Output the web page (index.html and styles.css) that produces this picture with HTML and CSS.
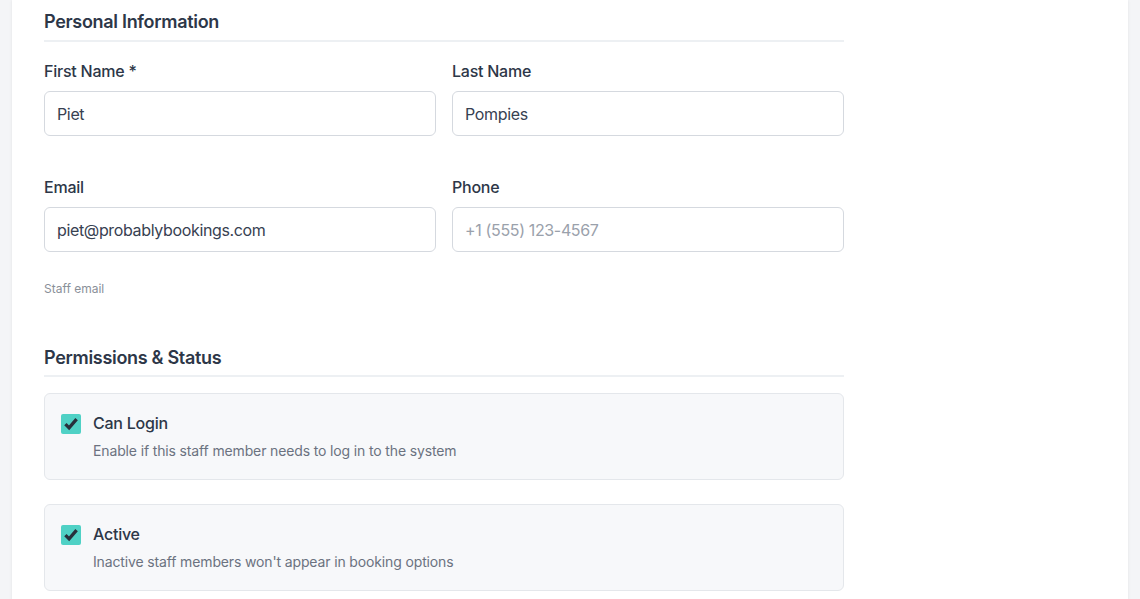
FILE: index.html
```html
<!DOCTYPE html>
<html lang="en">
<head>
<meta charset="utf-8">
<title>Staff</title>
<link rel="stylesheet" href="styles.css">
</head>
<body>
<div class="page">
  <div class="card">
    <div class="form">
      <h2 class="section-title">Personal Information</h2>
      <div class="row">
        <div class="field">
          <label class="label">First Name *</label>
          <input class="input" type="text" value="Piet">
        </div>
        <div class="field">
          <label class="label">Last Name</label>
          <input class="input" type="text" value="Pompies">
        </div>
      </div>
      <div class="row row-2">
        <div class="field">
          <label class="label">Email</label>
          <input class="input" type="text" value="piet@probablybookings.com">
          <div class="help">Staff email</div>
        </div>
        <div class="field">
          <label class="label">Phone</label>
          <input class="input" type="text" placeholder="+1 (555) 123-4567">
        </div>
      </div>

      <h2 class="section-title section-2">Permissions &amp; Status</h2>
      <div class="check-card">
        <span class="checkbox"><svg viewBox="0 0 20 20" width="20" height="20"><path d="M4.4 10.2 L8.1 13.9 L15.6 5.2" fill="none" stroke="#27303c" stroke-width="3.3"/></svg></span>
        <div class="check-text">
          <div class="check-title">Can Login</div>
          <div class="check-desc">Enable if this staff member needs to log in to the system</div>
        </div>
      </div>
      <div class="check-card">
        <span class="checkbox"><svg viewBox="0 0 20 20" width="20" height="20"><path d="M4.4 10.2 L8.1 13.9 L15.6 5.2" fill="none" stroke="#27303c" stroke-width="3.3"/></svg></span>
        <div class="check-text">
          <div class="check-title">Active</div>
          <div class="check-desc">Inactive staff members won't appear in booking options</div>
        </div>
      </div>
    </div>
  </div>
</div>
</body>
</html>
```

FILE: styles.css
```css
* { box-sizing: border-box; }
html, body {
  margin: 0;
  padding: 0;
  background: #f4f5f7;
  font-family: Inter, "Noto Sans", "Liberation Sans", sans-serif;
  color: #2d3748;
}
.page {
  padding: 0 12px;
  height: 599px;
  overflow: hidden;
}
.card {
  background: #ffffff;
  min-height: 700px;
  box-shadow: 0 0 3px rgba(0, 0, 0, 0.08);
  padding: 8px 32px 0;
}
.form {
  width: 800px;
}
.section-title {
  margin: 0 0 17px;
  font-size: 18px;
  line-height: 28px;
  font-weight: 600;
  letter-spacing: -0.017em;
  color: #2d3748;
  padding-bottom: 4px;
  border-bottom: 2px solid #edf0f3;
}
.section-2 {
  margin-top: 47px;
  margin-bottom: 16px;
  padding-bottom: 3px;
}
.row {
  display: grid;
  grid-template-columns: 1fr 1fr;
  gap: 16px;
}
.row-2 {
  margin-top: 39px;
}
.field {
  display: flex;
  flex-direction: column;
}
.label {
  font-size: 16px;
  line-height: 24px;
  font-weight: 500;
  letter-spacing: -0.015em;
  color: #2d3748;
  margin-bottom: 8px;
}
.input {
  height: 45px;
  border: 1px solid #d5d9df;
  border-radius: 6px;
  padding: 0 12px;
  font-family: inherit;
  font-size: 16px;
  letter-spacing: -0.022em;
  color: #374151;
  background: #fff;
  outline: none;
}
.input::placeholder {
  color: #9aa1ab;
}
.help {
  margin-top: 29px;
  font-size: 12px;
  line-height: 16px;
  color: #8a9099;
}
.check-card {
  display: flex;
  gap: 12px;
  align-items: flex-start;
  background: #f7f8fa;
  border: 1px solid #e4e7eb;
  border-radius: 6px;
  padding: 17px 16px 18px;
  margin-bottom: 24px;
}
.checkbox {
  flex: none;
  width: 20px;
  height: 20px;
  margin-top: 3px;
  background: #4fd1c5;
  border-radius: 2px;
  display: block;
}
.checkbox svg { display: block; }
.check-title {
  font-size: 16px;
  line-height: 24px;
  font-weight: 500;
  letter-spacing: -0.015em;
  color: #2d3748;
}
.check-desc {
  margin-top: 6px;
  font-size: 14px;
  line-height: 20px;
  letter-spacing: -0.01em;
  color: #6b7280;
}
```
